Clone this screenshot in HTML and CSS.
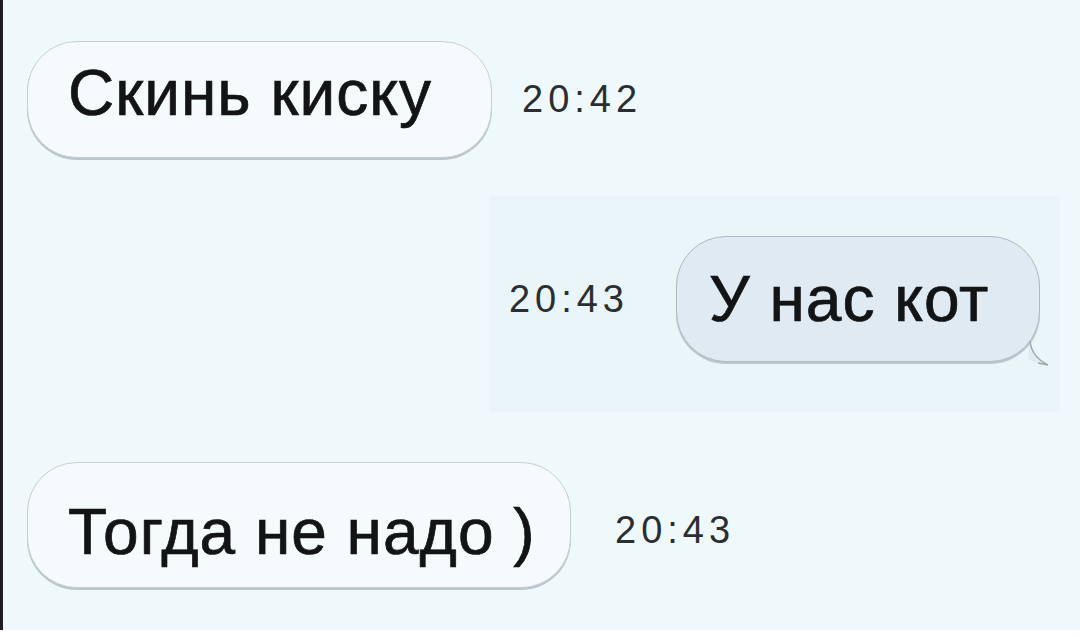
FILE: index.html
```html
<!DOCTYPE html>
<html lang="ru">
<head>
    <meta charset="UTF-8">
    <meta name="viewport" content="width=device-width, initial-scale=1.0">
    <title>Чат</title>
    <link rel="stylesheet" href="styles.css">
</head>
<body>
    <div class="screen">
        <div class="chat">
            <!-- Incoming -->
            <div class="row row-in first">
                <div class="bubble bubble-in">Скинь киску</div>
                <span class="time">20:42</span>
            </div>

            <!-- Outgoing -->
            <div class="row row-out">
                <span class="time">20:43</span>
                <div class="bubble bubble-out">
                    У нас кот
                    <svg class="tail" width="30" height="30" viewBox="0 0 30 30">
                        <path d="M2 2 C3 12 8 20 20 26 L10 24 C6 23 3 22 0 20 Z" fill="#dfeaf3"/>
                        <path d="M2 2 C3 12 8 20 20 26 L10 24" fill="none" stroke="#9ea9b0" stroke-width="1.5"/>
                    </svg>
                </div>
            </div>

            <!-- Incoming -->
            <div class="row row-in last">
                <div class="bubble bubble-in wide">Тогда не надо )</div>
                <span class="time">20:43</span>
            </div>
        </div>
    </div>
</body>
</html>
```

FILE: styles.css
```css
/* Reset */
* {
    margin: 0;
    padding: 0;
    box-sizing: border-box;
}

body {
    font-family: "Liberation Sans", Arial, sans-serif;
    background-color: #ffffff;
    color: #121416;
    width: 1080px;
    height: 637px;
    overflow: hidden;
}

/* Screenshot area */
.screen {
    height: 630px;
    border-left: 3px solid #1d1f20;
    background-color: #eff9fc;
}

.chat {
    display: flex;
    flex-direction: column;
}

/* Message rows */
.row {
    display: flex;
    align-items: center;
}

.row-in {
    padding-left: 24px;
}

.row-in.first {
    margin-top: 41px;
}

.row-in.first .time {
    margin-left: 30px;
}

.row-out {
    justify-content: flex-end;
    margin-top: 38px;
    margin-left: 487px;
    margin-right: 20px;
    padding: 40px 20px 50px 0;
    background-color: #eaf5f9;
}

.row-out .time {
    margin-right: 47px;
}

.row-in.last {
    margin-top: 50px;
}

.row-in.last .time {
    margin-left: 44px;
    margin-top: 10px;
}

/* Bubbles */
.bubble {
    position: relative;
    display: flex;
    align-items: center;
    height: 117px;
    padding-bottom: 14px;
    font-size: 64px;
    letter-spacing: 1px;
    -webkit-text-stroke: 0.7px #121416;
    border-radius: 50px;
    border: 1.5px solid #c5cfd3;
    box-shadow: 0 2px 0 #bcc6ca;
    white-space: nowrap;
}

.bubble-in {
    width: 465px;
    padding-left: 40px;
    background-color: #f5fbfd;
}

.bubble-in.wide {
    width: 544px;
    height: 126px;
    padding-bottom: 0;
    padding-top: 14px;
}

.bubble-out {
    width: 364px;
    height: 126px;
    padding-left: 32px;
    padding-bottom: 0;
    background-color: #dfeaf3;
    border-color: #aeb9c0;
}

/* Tail of the outgoing bubble */
.tail {
    position: absolute;
    right: -19px;
    bottom: -8px;
}

/* Timestamps */
.time {
    font-size: 38px;
    letter-spacing: 5px;
    color: #2b2e30;
}
```
